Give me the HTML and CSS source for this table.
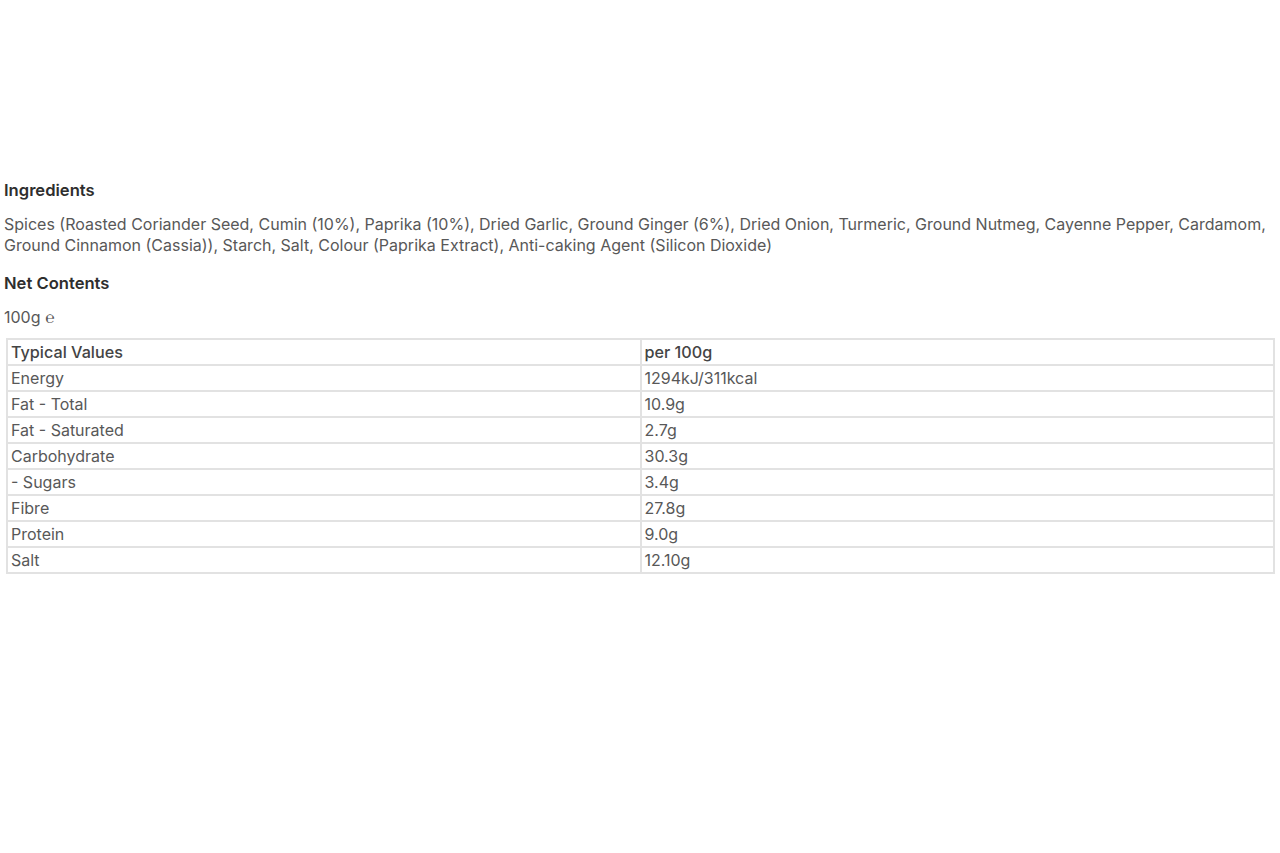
FILE: index.html
```html
<!DOCTYPE html>
<html>
<head>
<meta charset="utf-8">
<link rel="stylesheet" href="styles.css">
</head>
<body>
<div class="page">
  <h3 class="heading">Ingredients</h3>
  <p class="text">Spices (Roasted Coriander Seed, Cumin (10%), Paprika (10%), Dried Garlic, Ground Ginger (6%), Dried Onion, Turmeric, Ground Nutmeg, Cayenne Pepper, Cardamom, Ground Cinnamon (Cassia)), Starch, Salt, Colour (Paprika Extract), Anti-caking Agent (Silicon Dioxide)</p>
  <h3 class="heading">Net Contents</h3>
  <p class="text net">100g <span class="estimated">℮</span></p>
  <table class="nutrition">
    <thead>
      <tr><th>Typical Values</th><th>per 100g</th></tr>
    </thead>
    <tbody>
      <tr><td>Energy</td><td>1294kJ/311kcal</td></tr>
      <tr><td>Fat - Total</td><td>10.9g</td></tr>
      <tr><td>Fat - Saturated</td><td>2.7g</td></tr>
      <tr><td>Carbohydrate</td><td>30.3g</td></tr>
      <tr><td>- Sugars</td><td>3.4g</td></tr>
      <tr><td>Fibre</td><td>27.8g</td></tr>
      <tr><td>Protein</td><td>9.0g</td></tr>
      <tr><td>Salt</td><td>12.10g</td></tr>
    </tbody>
  </table>
</div>
</body>
</html>
```
FILE: styles.css
```css
html, body {
  margin: 0;
  padding: 0;
  background: #ffffff;
}
.page {
  padding: 178px 4px 0 4px;
  font-family: Inter, "Liberation Sans", sans-serif;
  color: #585858;
}
.heading {
  margin: 0;
  font-size: 16.6px;
  line-height: 24px;
  font-weight: 600;
  color: #2e2e2e;
}
.text {
  margin: 12px 0 15px 0;
  font-size: 16px;
  line-height: 21px;
}
.text.net {
  margin-bottom: 10px;
}
.estimated {
  font-family: "DejaVu Serif", serif;
  font-size: 16px;
}
.nutrition {
  margin-left: 2px;
  width: 1269px;
  border-collapse: collapse;
  font-size: 16px;
  color: #585858;
}
.nutrition th,
.nutrition td {
  border: 2px solid #e2e2e2;
  padding: 0 3px;
  height: 24px;
  line-height: 22px;
  text-align: left;
  width: 50%;
}
.nutrition th {
  font-weight: 500;
  font-size: 16.2px;
  color: #444444;
}
```
